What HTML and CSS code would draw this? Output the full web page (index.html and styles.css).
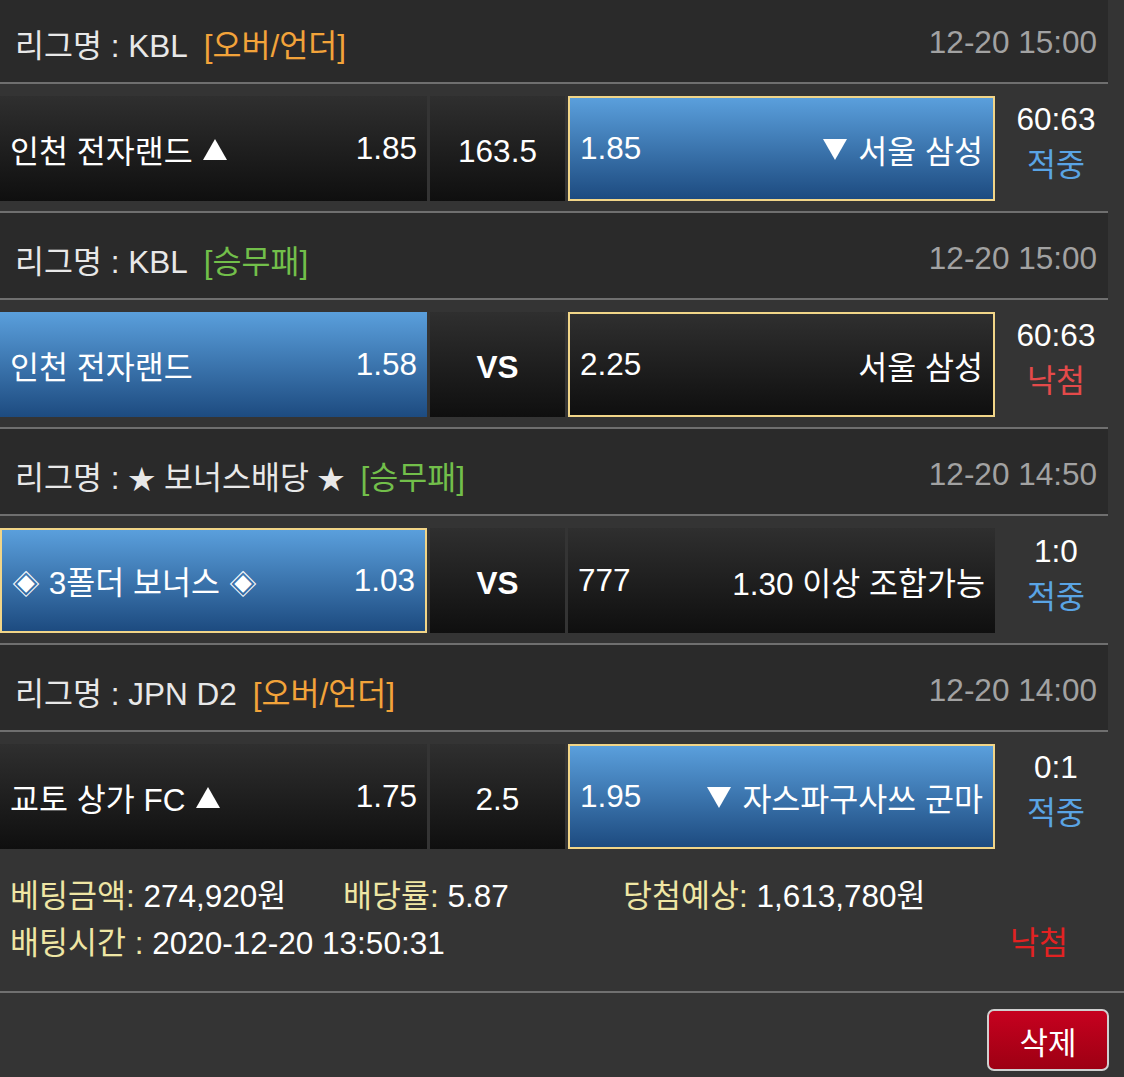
FILE: index.html
```html
<!DOCTYPE html>
<html lang="ko">
<head>
<meta charset="utf-8">
<title>베팅내역</title>
<link rel="stylesheet" href="styles.css">
</head>
<body>
<div class="page">
  <div class="list">
    <section class="game">
      <div class="league">
        <div class="name">리그명 : KBL<span class="tag orange">[오버/언더]</span></div>
        <div class="date">12-20 15:00</div>
      </div>
      <div class="row">
        <div class="cell side"><span class="team">인천 전자랜드 <svg class="tri" viewBox="0 0 24 21"><path d="M12 0L24 21H0z"/></svg></span><span class="odd">1.85</span></div>
        <div class="cell mid">163.5</div>
        <div class="cell side sel pick"><span class="odd">1.85</span><span class="team"><svg class="tri down" viewBox="0 0 24 21"><path d="M0 0H24L12 21z"/></svg> 서울 삼성</span></div>
        <div class="score"><div>60:63</div><div class="hit">적중</div></div>
      </div>
    </section>
    <section class="game">
      <div class="league">
        <div class="name">리그명 : KBL<span class="tag green">[승무패]</span></div>
        <div class="date">12-20 15:00</div>
      </div>
      <div class="row">
        <div class="cell side sel"><span class="team">인천 전자랜드</span><span class="odd">1.58</span></div>
        <div class="cell mid vs">VS</div>
        <div class="cell side pick"><span class="odd">2.25</span><span class="team">서울 삼성</span></div>
        <div class="score"><div>60:63</div><div class="miss">낙첨</div></div>
      </div>
    </section>
    <section class="game">
      <div class="league">
        <div class="name">리그명 : <span class="sym">★</span> 보너스배당 <span class="sym">★</span><span class="tag green">[승무패]</span></div>
        <div class="date">12-20 14:50</div>
      </div>
      <div class="row">
        <div class="cell side sel pick"><span class="team"><span class="sym dia">◈</span> 3폴더 보너스 <span class="sym dia">◈</span></span><span class="odd">1.03</span></div>
        <div class="cell mid vs">VS</div>
        <div class="cell side"><span class="odd">777</span><span class="team">1.30 이상 조합가능</span></div>
        <div class="score"><div>1:0</div><div class="hit">적중</div></div>
      </div>
    </section>
    <section class="game">
      <div class="league">
        <div class="name">리그명 : JPN D2<span class="tag orange">[오버/언더]</span></div>
        <div class="date">12-20 14:00</div>
      </div>
      <div class="row">
        <div class="cell side"><span class="team">교토 상가 FC <svg class="tri" viewBox="0 0 24 21"><path d="M12 0L24 21H0z"/></svg></span><span class="odd">1.75</span></div>
        <div class="cell mid">2.5</div>
        <div class="cell side sel pick"><span class="odd">1.95</span><span class="team"><svg class="tri down" viewBox="0 0 24 21"><path d="M0 0H24L12 21z"/></svg> 자스파구사쓰 군마</span></div>
        <div class="score"><div>0:1</div><div class="hit">적중</div></div>
      </div>
    </section>
    <div class="summary">
      <div class="line">
        <div class="col c1"><span class="lbl">베팅금액:</span> 274,920원</div>
        <div class="col c2"><span class="lbl">배당률:</span> 5.87</div>
        <div class="col"><span class="lbl">당첨예상:</span> 1,613,780원</div>
      </div>
      <div class="line">
        <div class="col"><span class="lbl">배팅시간 :</span> 2020-12-20 13:50:31</div>
        <div class="result">낙첨</div>
      </div>
    </div>
  </div>
  <div class="actions">
    <button class="del" type="button">삭제</button>
  </div>
</div>
</body>
</html>
```

FILE: styles.css
```css
* {
  box-sizing: border-box;
}

body {
  margin: 0;
  background: #343434;
  color: #ffffff;
  font-family: "Liberation Sans", "Noto Sans CJK KR", sans-serif;
  font-size: 31.5px;
  overflow: hidden;
}

.page {
  width: 1124px;
  margin-top: -3px;
}

.list {
  width: 1108px;
}

.league {
  height: 87px;
  background: #2a2a2a;
  border-bottom: 2px solid #6f6f6f;
  display: flex;
  align-items: center;
  justify-content: space-between;
  padding: 6px 11px 0 15px;
  color: #e8e8e8;
  white-space: nowrap;
}

.tag {
  margin-left: 16px;
}

.orange {
  color: #f2a33a;
}

.green {
  color: #72bf4a;
}

.sym {
  font-family: "Noto Sans CJK KR", sans-serif;
  font-size: 27px;
}

.date {
  color: #a2a2a2;
}

.row {
  display: flex;
  padding: 12px 0 10px;
  border-bottom: 2px solid #6f6f6f;
}

.game:nth-child(4) .row {
  padding-bottom: 0;
  border-bottom: 0;
}

.cell {
  height: 105px;
  display: flex;
  align-items: center;
  justify-content: space-between;
  padding: 0 10px;
  background: linear-gradient(#2f2f2f, #0f0f0f);
  white-space: nowrap;
}

.side {
  width: 427px;
}

.mid {
  width: 135px;
  margin: 0 3px;
  justify-content: center;
  padding-top: 5px;
}

.vs {
  font-weight: bold;
}

.sel {
  background: linear-gradient(#5a9fdc, #1d4b80);
}

.pick {
  border: 2px solid #f1d588;
}

.tri {
  width: 24px;
  height: 21px;
  fill: #ffffff;
  vertical-align: 3px;
  margin-left: 2px;
}

.tri.down {
  margin-left: 0;
  margin-right: 3px;
}

.dia {
  font-size: 28px;
}

.score {
  flex: 1;
  text-align: center;
  line-height: 46px;
  padding-left: 9px;
}

.hit {
  color: #5aa4e4;
}

.miss {
  color: #e44a4a;
}

.summary {
  height: 142px;
  padding: 20px 40px 0 10px;
}

.line {
  display: flex;
  align-items: center;
  height: 47px;
  white-space: nowrap;
}

.c1 {
  width: 333px;
}

.c2 {
  width: 280px;
}

.lbl {
  color: #efe6a4;
}

.result {
  margin-left: auto;
  color: #e22222;
}

.actions {
  border-top: 2px solid #707070;
  display: flex;
  justify-content: flex-end;
  padding: 16px 15px 0 0;
}

.del {
  width: 122px;
  height: 62px;
  border: 2px solid #cfcfcf;
  border-radius: 7px;
  background: linear-gradient(#c6011f, #9d0013);
  color: #ffffff;
  font-family: "Liberation Sans", "Noto Sans CJK KR", sans-serif;
  font-size: 31px;
  padding: 0;
}
```
